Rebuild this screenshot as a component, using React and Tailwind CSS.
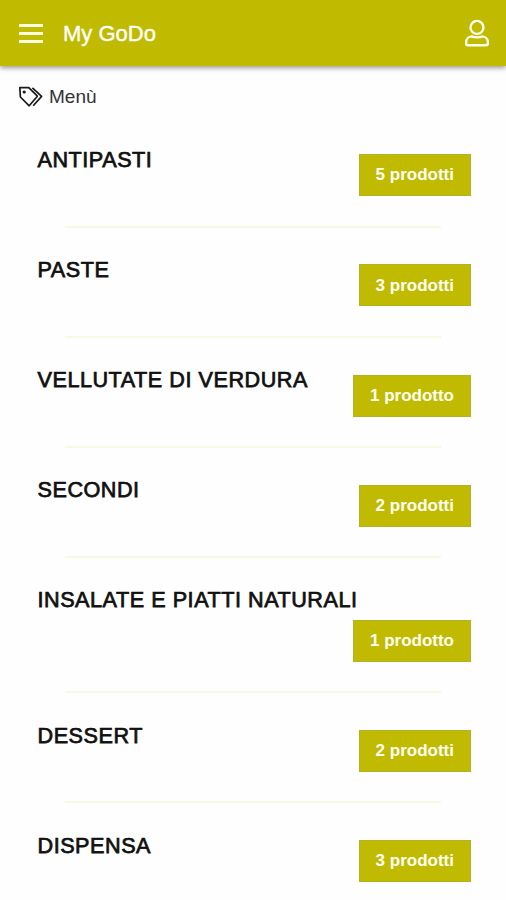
const categories = [
  { name: "ANTIPASTI", count: 5 },
  { name: "PASTE", count: 3 },
  { name: "VELLUTATE DI VERDURA", count: 1 },
  { name: "SECONDI", count: 2 },
  { name: "INSALATE E PIATTI NATURALI", count: 1 },
  { name: "DESSERT", count: 2 },
  { name: "DISPENSA", count: 3 },
];

function Header() {
  return (
    <header className="flex h-[66px] items-center bg-[#c0bb00] pl-[19px] pr-4 text-white shadow-[0_2px_5px_rgba(0,0,0,0.4)]">
      <button className="flex w-6 flex-col gap-[5px]" aria-label="Apri menu">
        <span className="h-[3px] w-full bg-[#fffde0]" />
        <span className="h-[3px] w-full bg-[#fffde0]" />
        <span className="h-[3px] w-full bg-[#fffde0]" />
      </button>
      <span className="ml-5 pt-px text-[22px] leading-7 [-webkit-text-stroke:0.4px_white]">My GoDo</span>
      <button className="ml-auto" aria-label="Profilo">
        <svg width="26" height="30" viewBox="0 0 26 30" fill="none" stroke="#fffff0" strokeWidth="2.4" strokeLinejoin="round">
          <circle cx="13" cy="9.4" r="6.5" />
          <path d="M7.6 18.4c2.6 1.3 8.2 1.3 10.8 0 3.2.2 5.4 2.8 5.4 5.6v1.8c0 .9-.6 1.5-1.5 1.5H3.7c-.9 0-1.5-.6-1.5-1.5V24c0-2.8 2.2-5.4 5.4-5.6z" />
        </svg>
      </button>
    </header>
  );
}

function CategoryRow({ name, count }) {
  return (
    <li>
      <div className="flex flex-wrap items-start justify-between pl-[37.5px] pr-[35px] pt-[29.4px]">
        <h2 className="pr-2 text-[21.6px] leading-[25px] tracking-[0.54px] text-[#111] [-webkit-text-stroke:0.75px_#111]">
          {name}
        </h2>
        <button className="ml-auto mt-[7.4px] h-[42px] border border-[#b3b126] bg-[#c0bb00] px-4 text-[17px] font-bold text-[#fffff5]">
          {count} {count === 1 ? "prodotto" : "prodotti"}
        </button>
      </div>
      <div className="mx-[65px] mt-[29.4px] h-[2px] bg-[#f7f8e6]" />
    </li>
  );
}

export default function App() {
  return (
    <div className="h-[900px] w-full overflow-hidden bg-[#fefefe] font-['Liberation_Sans',Arial,sans-serif]">
      <Header />
      <div className="flex h-[51.4px] items-center gap-1.5 pl-[18px] pt-[10px] text-[19px] text-[#333]">
        <svg width="25" height="22" viewBox="0 0 25 22" fill="none" stroke="#1a1a1a" strokeWidth="1.7" strokeLinejoin="round">
          <path d="M1.8 1.6h9l8.6 8.6-8.2 9.6L2.4 11z" />
          <path d="M14.4 1.8l9.2 8.6-8.4 9.4" />
          <circle cx="6.2" cy="6" r="1.6" fill="#1a1a1a" stroke="none" />
        </svg>
        <h1 className="pt-px">Menù</h1>
      </div>
      <ul>
        {categories.map((c) => (
          <CategoryRow key={c.name} name={c.name} count={c.count} />
        ))}
      </ul>
    </div>
  );
}
